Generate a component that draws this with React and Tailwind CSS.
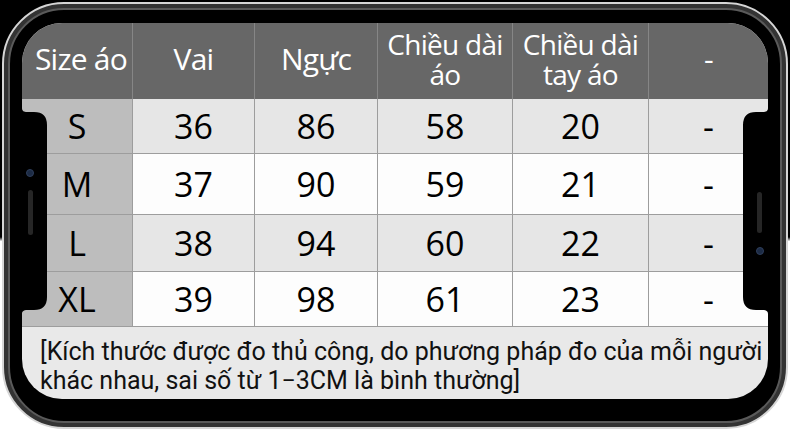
const header = ['Size áo', 'Vai', 'Ngực', 'Chiều dài\náo', 'Chiều dài\ntay áo', '-']

const rows = [
  { size: 'S', vals: ['36', '86', '58', '20', '-'], h: 'h-[55px]', bg: 'bg-[#e6e6e6]' },
  { size: 'M', vals: ['37', '90', '59', '21', '-'], h: 'h-[61px]', bg: 'bg-[#fdfdfd]' },
  { size: 'L', vals: ['38', '94', '60', '22', '-'], h: 'h-[57px]', bg: 'bg-[#e6e6e6]' },
  { size: 'XL', vals: ['39', '98', '61', '23', '-'], h: 'h-[55px]', bg: 'bg-[#fdfdfd]' },
]

const cols = 'grid grid-cols-[111px_122px_123px_135px_136px_119px]'

function Notch({ side }) {
  const left = side === 'left'
  return (
    <svg
      width="26"
      height="206"
      viewBox="0 0 26 206"
      className={left ? 'absolute left-0 top-[85px]' : 'absolute right-0 top-[85px] -scale-x-100'}
    >
      <path
        d="M0 0 C0 3 2 4 5 4 L12 4 Q25 4 25 17 L25 189 Q25 202 12 202 L5 202 C2 202 0 203 0 206 Z"
        fill="#000"
      />
      {left ? (
        <>
          <circle cx="8" cy="65" r="3.5" fill="#1c2b45" stroke="#2f3f5c" strokeWidth="1" />
          <rect x="6" y="82" width="5" height="45" rx="2.5" fill="#262626" />
        </>
      ) : (
        <>
          <rect x="6" y="84" width="5" height="41" rx="2.5" fill="#262626" />
          <circle cx="8" cy="143" r="3.5" fill="#1c2b45" stroke="#2f3f5c" strokeWidth="1" />
        </>
      )}
    </svg>
  )
}

export default function App() {
  return (
    <div className="h-[431px] w-[790px] overflow-hidden bg-[linear-gradient(to_bottom,#000_0%,#000_55%,#fff_56%,#fff_100%)] pl-[2px] pt-[2px]">
      <div className="h-[427px] w-[786px] rounded-[62px] border-2 border-[#d6d6d6] bg-[#333] p-[4px]">
        <div className="h-full w-full rounded-[56px] border-2 border-[#5a5a5a] bg-black pb-[22px] pl-[12px] pr-[12px] pt-[13px]">
          <div className="relative h-full w-full overflow-hidden rounded-[40px] bg-[#e9e9e9]">
            <div className={`${cols} h-[76px] bg-[#676767] text-white`} style={{ fontFamily: '"Open Sans", sans-serif' }}>
              {header.map((t, i) => (
                <div
                  key={i}
                  className={`flex items-center justify-center whitespace-pre-line pb-[4px] text-center leading-[30px] tracking-tight ${i < 3 || i === 5 ? 'text-[30px]' : 'text-[28px]'} ${i < 5 ? 'border-r border-[#868686]' : ''} ${i === 0 ? 'pl-[8px]' : ''}`}
                >
                  {t}
                </div>
              ))}
            </div>

            {rows.map((r) => (
              <div
                key={r.size}
                className={`${cols} ${r.h} text-black`}
                style={{ fontFamily: '"Open Sans", sans-serif' }}
              >
                <div className="flex items-center justify-center border-b border-r border-[#9d9d9d] bg-[#bdbdbd] text-[34px] font-medium">
                  {r.size}
                </div>
                {r.vals.map((v, i) => (
                  <div
                    key={i}
                    className={`flex items-center justify-center border-b border-[#9d9d9d] ${r.bg} text-[34px] font-medium ${i < 4 ? 'border-r' : ''}`}
                  >
                    {v}
                  </div>
                ))}
              </div>
            ))}

            <div
              className="whitespace-nowrap pl-[18px] pt-[10px] text-[25px] leading-[29px] text-[#111]"
              style={{ fontFamily: 'Roboto, sans-serif' }}
            >
              [Kích thước được đo thủ công, do phương pháp đo của mỗi người
              <br />
              khác nhau, sai số từ 1−3CM là bình thường]
            </div>

            <Notch side="left" />
            <Notch side="right" />
          </div>
        </div>
      </div>
    </div>
  )
}
